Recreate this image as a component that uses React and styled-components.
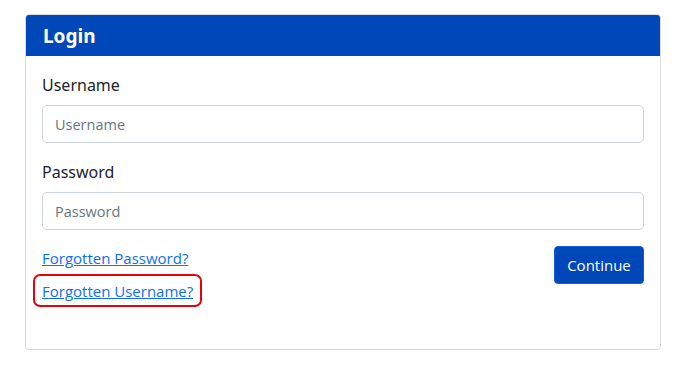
import React from 'react'
import styled, { createGlobalStyle } from 'styled-components'

const GlobalStyle = createGlobalStyle`
  body {
    margin: 0;
    background: #fff;
    font-family: 'Open Sans', 'Liberation Sans', sans-serif;
  }
`

const Page = styled.div`
  padding: 14px 25px;
`

const Card = styled.div`
  border: 1px solid #dcdcdc;
  border-radius: 4px;
  overflow: hidden;
  height: 336px;
  box-sizing: border-box;
`

const CardHeader = styled.div`
  background: #0047ba;
  color: #fff;
  height: 41px;
  padding: 0 17px;
  display: flex;
  align-items: center;
  font-family: 'Noto Sans', 'Open Sans', sans-serif;
  font-weight: 700;
  font-size: 19px;
`

const CardBody = styled.div`
  padding: 17px 16px 0 16px;
`

const Field = styled.div`
  display: flex;
  flex-direction: column;
  margin-bottom: ${(p) => p.gap || 0}px;
`

const Label = styled.label`
  font-family: 'Noto Sans', 'Open Sans', sans-serif;
  font-size: 16px;
  line-height: 24px;
  color: #212529;
  margin-bottom: 8px;
`

const Input = styled.input`
  height: 38px;
  box-sizing: border-box;
  border: 1px solid #ced4da;
  border-radius: 5px;
  padding: 0 12px;
  font-family: 'Open Sans', sans-serif;
  font-size: 14.5px;
  color: #212529;
  &::placeholder {
    color: #6c757d;
  }
`

const Footer = styled.div`
  display: flex;
  justify-content: space-between;
  align-items: flex-start;
  margin-top: 16px;
`

const Links = styled.div`
  display: flex;
  flex-direction: column;
  align-items: flex-start;
  gap: 9px;
`

const LinkText = styled.a`
  color: #0d6efd;
  text-decoration: underline;
  font-size: 15px;
  line-height: 24px;
  position: relative;
  cursor: pointer;
  ${(p) => p.highlight && `
    &::after {
      content: '';
      position: absolute;
      left: -9px;
      right: -9px;
      top: -5px;
      bottom: -4px;
      border: 2px solid #e8000b;
      border-radius: 7px;
    }
  `}
`

const Button = styled.button`
  background: #0047ba;
  color: #fff;
  border: 1px solid #0d5ee0;
  border-radius: 4px;
  width: 90px;
  height: 38px;
  font-family: 'Open Sans', sans-serif;
  font-size: 15px;
  cursor: pointer;
`

export default function App () {
  return (
    <Page>
      <GlobalStyle />
      <Card>
        <CardHeader>Login</CardHeader>
        <CardBody>
          <Field gap={17}>
            <Label>Username</Label>
            <Input placeholder='Username' />
          </Field>
          <Field>
            <Label>Password</Label>
            <Input type='password' placeholder='Password' />
          </Field>
          <Footer>
            <Links>
              <LinkText>Forgotten Password?</LinkText>
              <LinkText highlight>Forgotten Username?</LinkText>
            </Links>
            <Button>Continue</Button>
          </Footer>
        </CardBody>
      </Card>
    </Page>
  )
}
